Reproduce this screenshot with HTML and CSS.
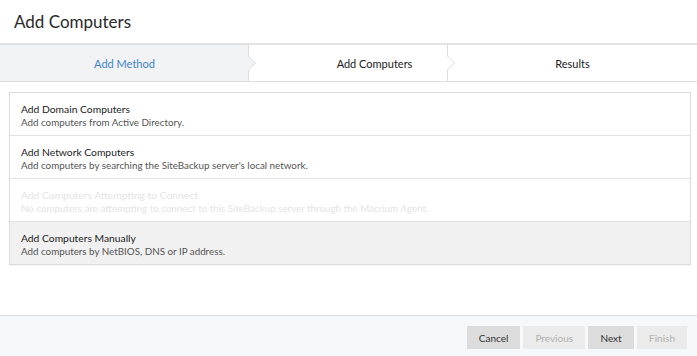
FILE: index.html
```html
<!DOCTYPE html>
<html>
<head>
  <title>Add Computers</title>
  <link rel="stylesheet" href="styles.css">
</head>
<body>
  <div class="dialog">
    <div class="header">Add Computers</div>

    <div class="steps">
      <div class="step step-active">
        Add Method
        <svg class="chevron" width="10" height="36" viewBox="0 0 10 36">
          <path d="M0.5 0 V11 L7.5 18 L0.5 25 V36" fill="#f2f3f5" stroke="#dcdcdc" stroke-width="1"/>
        </svg>
      </div>
      <div class="step step-mid">
        Add Computers
        <svg class="chevron" width="10" height="36" viewBox="0 0 10 36">
          <path d="M0.5 0 V11 L7.5 18 L0.5 25 V36" fill="#fff" stroke="#dcdcdc" stroke-width="1"/>
        </svg>
      </div>
      <div class="step step-last">Results</div>
    </div>

    <div class="content">
      <div class="method-list">
        <div class="method">
          <div class="method-title">Add Domain Computers</div>
          <div class="method-desc">Add computers from Active Directory.</div>
        </div>
        <div class="method">
          <div class="method-title">Add Network Computers</div>
          <div class="method-desc">Add computers by searching the SiteBackup server's local network.</div>
        </div>
        <div class="method disabled">
          <div class="method-title">Add Computers Attempting to Connect</div>
          <div class="method-desc">No computers are attempting to connect to this SiteBackup server through the Macrium Agent.</div>
        </div>
        <div class="method selected">
          <div class="method-title">Add Computers Manually</div>
          <div class="method-desc">Add computers by NetBIOS, DNS or IP address.</div>
        </div>
      </div>
    </div>

    <div class="footer">
      <button class="btn">Cancel</button>
      <button class="btn btn-off">Previous</button>
      <button class="btn">Next</button>
      <button class="btn btn-off">Finish</button>
    </div>
  </div>
</body>
</html>
```

FILE: styles.css
```css
body {
  margin: 0;
  font-family: Lato, "Open Sans", sans-serif;
  background: #fff;
  color: #222;
}
.dialog {
  display: flex;
  flex-direction: column;
  height: 356px;
}
.header {
  height: 43px;
  line-height: 44px;
  padding-left: 14px;
  font-size: 17px;
  color: #2a2a2a;
  border-bottom: 2px solid #e2e2e2;
}
.steps {
  display: flex;
  height: 36px;
  border-bottom: 1px solid #dedede;
  font-size: 11px;
}
.step {
  position: relative;
  display: flex;
  align-items: center;
  justify-content: center;
  color: #222;
}
.step-active {
  width: 249px;
  background: #f2f3f5;
  color: #3d83cc;
}
.step-mid {
  width: 199px;
  padding-left: 52px;
  box-sizing: border-box;
}
.step-last {
  flex: 1;
}
.chevron {
  position: absolute;
  top: 0;
  right: -9px;
  z-index: 1;
}
.content {
  flex: 1;
  padding: 10px 6px 0 9px;
}
.method-list {
  border: 1px solid #dcdcdc;
  box-shadow: 0 1px 1px rgba(0, 0, 0, 0.04);
}
.method {
  padding: 10px 11px 6px;
  border-bottom: 1px solid #e2e2e2;
  height: 26px;
}
.method:last-child {
  border-bottom: none;
}
.method-title {
  font-size: 10.3px;
  line-height: 13px;
  color: #222;
}
.method-desc {
  font-size: 9.8px;
  line-height: 13px;
  color: #555;
}
.method.disabled .method-title,
.method.disabled .method-desc {
  color: #e4e4e4;
}
.method.selected {
  background: #f1f1f1;
}
.footer {
  height: 41px;
  border-top: 1px solid #dedede;
  background: #f7f8fa;
  display: flex;
  justify-content: flex-end;
  align-items: flex-start;
  padding: 10px 10px 0 0;
  box-sizing: border-box;
  gap: 3px;
}
.btn {
  height: 23px;
  min-width: 46px;
  padding: 0 12px;
  border: none;
  background: #dcdcdc;
  color: #333;
  font-family: Lato, "Open Sans", sans-serif;
  font-size: 10px;
}
.btn-off {
  background: #ebebeb;
  color: #b0b0b0;
}
```
